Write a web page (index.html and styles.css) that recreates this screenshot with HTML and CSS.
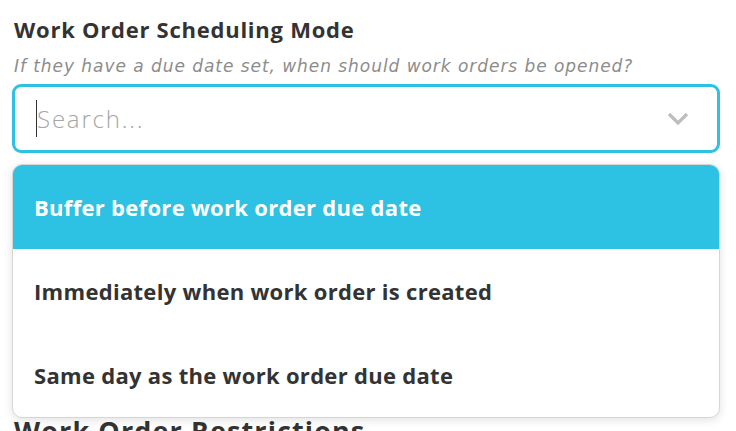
FILE: index.html
```html
<!DOCTYPE html>
<html>
<head>
<meta charset="utf-8">
<link rel="stylesheet" href="styles.css">
</head>
<body>
<div class="page">
  <div class="field">
    <h2 class="label">Work Order Scheduling Mode</h2>
    <p class="hint">If they have a due date set, when should work orders be opened?</p>
    <div class="select">
      <div class="control">
        <span class="caret"></span>
        <span class="placeholder">Search...</span>
        <svg class="chevron" width="22" height="14" viewBox="0 0 22 14"><path d="M2 2 L11 11 L20 2" fill="none" stroke="#bdbdbd" stroke-width="3.2"/></svg>
      </div>
      <ul class="menu">
        <li class="option active">Buffer before work order due date</li>
        <li class="option">Immediately when work order is created</li>
        <li class="option">Same day as the work order due date</li>
      </ul>
    </div>
  </div>
  <h1 class="section">Work Order Restrictions</h1>
</div>
</body>
</html>
```

FILE: styles.css
```css
* { box-sizing: border-box; }
html, body { margin: 0; padding: 0; background: #fff; }
body { font-family: "Open Sans", "Noto Sans", sans-serif; color: #333; overflow: hidden; height: 431px; }
.page { padding: 16px 16px 0 14px; }
.label { margin: 0; font-size: 22px; font-weight: 700; line-height: 26px; color: #333; letter-spacing: 0.75px; }
.hint { margin: 13px 0 0; font-size: 17px; font-style: italic; color: #8c8c8c; line-height: 22px; font-family: "DejaVu Sans", sans-serif; letter-spacing: 0.95px; }
.select { position: relative; margin-top: 7px; margin-left: -2px; width: 708px; }
.control { height: 69px; border: 3px solid #2dc1e4; border-radius: 9px; display: flex; align-items: center; padding: 0 28px 0 21px; }
.caret { width: 1px; height: 37px; background: #333; }
.placeholder { font-size: 24px; color: #a6a6a6; font-weight: 300; letter-spacing: 1.8px; }
.chevron { margin-left: auto; }
.menu { position: absolute; top: 80px; left: 0; right: 0; margin: 0; padding: 0; list-style: none; background: #fff; border: 1px solid #d6d6d6; border-radius: 10px; box-shadow: 0 2px 10px rgba(0,0,0,0.12); overflow: hidden; z-index: 2; }
.option { height: 84px; display: flex; align-items: center; padding-left: 21px; font-size: 22px; font-weight: 700; color: #333; letter-spacing: 0.3px; }
.option.active { background: #2dc1e4; color: #fff; }
.section { margin: 261px 0 0; font-size: 27px; font-weight: 700; color: #333; line-height: 34px; letter-spacing: 1.1px; }
```
